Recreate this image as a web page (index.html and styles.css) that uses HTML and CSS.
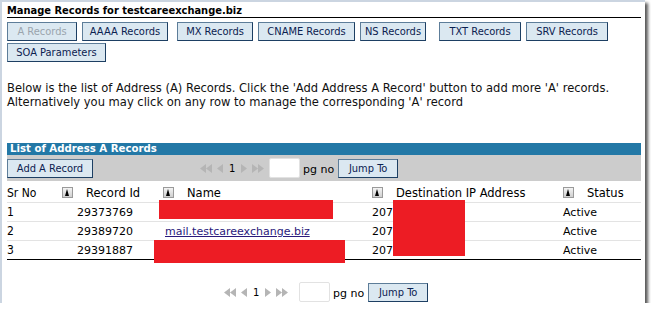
FILE: index.html
```html
<!DOCTYPE html>
<html>
<head>
<meta charset="utf-8">
<link rel="stylesheet" href="styles.css">
</head>
<body>
<div class="frame">
  <div class="title">Manage Records for testcareexchange.biz</div>
  <div class="tabs">
    <button class="btn tab t-a disabled">A Records</button>
    <button class="btn tab t-aaaa">AAAA Records</button>
    <button class="btn tab t-mx">MX Records</button>
    <button class="btn tab t-cname">CNAME Records</button>
    <button class="btn tab t-ns">NS Records</button>
    <button class="btn tab t-txt">TXT Records</button>
    <button class="btn tab t-srv">SRV Records</button>
    <button class="btn tab t-soa">SOA Parameters</button>
  </div>
  <p class="desc">Below is the list of Address (A) Records. Click the 'Add Address A Record' button to add more 'A' records.<br>Alternatively you may click on any row to manage the corresponding 'A' record</p>

  <div class="list">
    <div class="list-head">List of Address A Records</div>
    <div class="toolbar">
      <button class="btn add">Add A Record</button>
      <div class="pager">
        <span class="nav">
          <svg width="14" height="9" viewBox="0 0 14 9"><path d="M1 4.5 7 0v9zM7 4.5 13 0v9z" fill="#b5b5b5"/></svg>
          <svg width="8" height="9" viewBox="0 0 8 9"><path d="M1 4.5 7 0v9z" fill="#b5b5b5"/></svg>
          <span class="pg">1</span>
          <svg width="8" height="9" viewBox="0 0 8 9"><path d="M7 4.5 1 0v9z" fill="#b5b5b5"/></svg>
          <svg width="14" height="9" viewBox="0 0 14 9"><path d="M7 4.5 1 0v9zM13 4.5 7 0v9z" fill="#b5b5b5"/></svg>
        </span>
        <span class="pgbox"></span>
        <span class="pglabel">pg no</span>
        <button class="btn jump">Jump To</button>
      </div>
    </div>
    <div class="tablewrap">
      <table class="records">
        <thead>
          <tr>
            <th class="c-sr">Sr No</th>
            <th class="c-id"><span class="sort"></span>Record Id</th>
            <th class="c-name"><span class="sort"></span>Name</th>
            <th class="c-ip"><span class="sort"></span>Destination IP Address</th>
            <th class="c-st"><span class="sort"></span>Status</th>
          </tr>
        </thead>
        <tbody>
          <tr><td>1</td><td class="num">29373769</td><td></td><td class="ip">207</td><td class="st">Active</td></tr>
          <tr><td>2</td><td class="num">29389720</td><td class="nm"><a href="#">mail.testcareexchange.biz</a></td><td class="ip">207</td><td class="st">Active</td></tr>
          <tr><td>3</td><td class="num">29391887</td><td></td><td class="ip">207</td><td class="st">Active</td></tr>
        </tbody>
      </table>
      <span class="redact r1"></span>
      <span class="redact r3"></span>
      <span class="redact rip"></span>
    </div>
  </div>

  <div class="pager bottom">
    <span class="nav">
      <svg width="14" height="9" viewBox="0 0 14 9"><path d="M1 4.5 7 0v9zM7 4.5 13 0v9z" fill="#b5b5b5"/></svg>
      <svg width="8" height="9" viewBox="0 0 8 9"><path d="M1 4.5 7 0v9z" fill="#b5b5b5"/></svg>
      <span class="pg">1</span>
      <svg width="8" height="9" viewBox="0 0 8 9"><path d="M7 4.5 1 0v9z" fill="#b5b5b5"/></svg>
      <svg width="14" height="9" viewBox="0 0 14 9"><path d="M7 4.5 1 0v9zM13 4.5 7 0v9z" fill="#b5b5b5"/></svg>
    </span>
    <span class="pgbox"></span>
    <span class="pglabel">pg no</span>
    <button class="btn jump">Jump To</button>
  </div>
</div>
</body>
</html>
```
FILE: styles.css
```css
html, body {
  margin: 0;
  padding: 0;
  background: #ffffff;
}
.frame {
  border-top: 2px solid #cbd5e1;
  border-left: 2px solid #cbd5e1;
  background: #fff;
  box-shadow: 3px 3px 3px rgba(0,0,0,0.65);
  padding: 0 5px;
  box-sizing: border-box;
  width: 645px;
  height: 303px;
  font-family: "DejaVu Sans Condensed", "DejaVu Sans", sans-serif;
  font-size: 11px;
  color: #000;
  overflow: hidden;
}
.title {
  font-family: "DejaVu Sans Condensed", sans-serif;
  font-weight: bold;
  font-size: 11px;
  line-height: 13px;
  padding-top: 2px;
  border-bottom: 1px solid #000;
  width: 634px;
}
.tabs {
  display: flex;
  flex-wrap: wrap;
  column-gap: 5px;
  row-gap: 2px;
  margin-top: 4px;
  width: 620px;
}
.btn {
  font-family: "DejaVu Sans Condensed", sans-serif;
  font-size: 11px;
  line-height: 14px;
  background: #dbe8f1;
  color: #0b2150;
  border: 1px solid #5d7d99;
  border-right-color: #1d3f63;
  border-bottom-color: #1d3f63;
  padding: 2px 0 1px;
  margin: 0;
  height: 19px;
  box-sizing: border-box;
  white-space: nowrap;
  text-align: center;
}
.tab.disabled { color: #9aa4ad; }
.t-a { width: 70px; }
.t-aaaa { width: 86px; }
.t-mx { width: 76px; margin-left: 4px; }
.t-cname { width: 97px; }
.t-ns { width: 66px; }
.t-txt { width: 82px; margin-left: 8px; }
.t-srv { width: 82px; }
.t-soa { width: 99px; }
.desc {
  margin: 19px 0 0;
  font-size: 12.8px;
  line-height: 14px;
  color: #111;
  height: 38px;
}
.list {
  margin-top: 24px;
  width: 634px;
}
.list-head {
  background: #2378a6;
  color: #fff;
  font-weight: bold;
  font-size: 11.3px;
  line-height: 12px;
  height: 12px;
  padding-left: 3px;
}
.toolbar {
  background: #cccccc;
  height: 26px;
  display: flex;
  align-items: center;
}
.add { width: 86px; }
.pager {
  display: flex;
  align-items: center;
  margin-left: 106px;
}
.nav {
  display: flex;
  align-items: center;
  gap: 3px;
  width: 70px;
}
.pg {
  font-family: "DejaVu Sans", sans-serif;
  font-size: 10px;
  margin: 0 2px;
}
.pgbox {
  display: inline-block;
  width: 31px;
  height: 20px;
  background: #fff;
  border: 1px solid #e2e2e2;
  box-sizing: border-box;
  border-radius: 2px;
}
.pglabel {
  font-family: "DejaVu Sans", sans-serif;
  font-size: 11px;
  margin: 3px 4px 0 3px;
}
.jump { width: 60px; }
.tablewrap { position: relative; }
.records {
  border-collapse: collapse;
  width: 634px;
  font-family: "DejaVu Sans", sans-serif;
  font-size: 11px;
}
.records th {
  font-weight: normal;
  text-align: left;
  height: 19px;
  padding: 2px 0 0;
  font-size: 11.5px;
  font-family: "DejaVu Sans", sans-serif;
  white-space: nowrap;
}
.records th.c-sr { font-family: "DejaVu Sans Condensed", sans-serif; font-size: 12px; width: 55px; }
.records td {
  height: 18px;
  padding: 0;
  border-top: 1px solid #e3e3e3;
  vertical-align: middle;
}
.records tbody tr:last-child td { border-bottom: 1px solid #000; }
.records td:first-child { font-size: 12px; font-family: "DejaVu Sans Condensed", sans-serif; }
.c-id { width: 101px; }
.c-name { width: 209px; }
.c-ip { width: 191px; }
.records td.num { padding-left: 15px; }
.records td.nm { padding-left: 2px; }
.records td.nm a { color: #2a1a7c; }
.sort {
  display: inline-block;
  width: 11px;
  height: 11px;
  box-sizing: border-box;
  border: 1px solid #9a9a9a;
  background: linear-gradient(#f4f4f4, #cfcfcf);
  position: relative;
  vertical-align: -1px;
  margin-right: 13px;
}
.sort::after {
  content: "";
  position: absolute;
  left: 2px;
  top: 1px;
  border-left: 2.5px solid transparent;
  border-right: 2.5px solid transparent;
  border-bottom: 7px solid #000;
}
.redact {
  position: absolute;
  background: #ed1c24;
}
.r1 { left: 152px; top: 19px; width: 174px; height: 19px; }
.r3 { left: 147px; top: 59px; width: 191px; height: 23px; }
.rip { left: 386px; top: 19px; width: 72px; height: 56px; }
.pager.bottom { margin: 22px 0 0 216px; }
.pager.bottom .pgbox { margin-left: 6px; }
```
